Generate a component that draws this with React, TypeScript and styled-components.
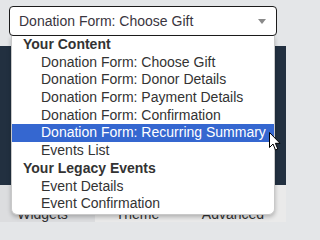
import styled, { createGlobalStyle } from 'styled-components';

const GlobalStyle = createGlobalStyle`
  html, body {
    margin: 0;
    padding: 0;
    background: #e4e6e8;
  }
  body {
    font-family: "Liberation Sans", Arial, sans-serif;
    font-size: 14px;
    color: #333;
  }
`;

const Page = styled.div`
  width: 286px;
  height: 222px;
  display: flex;
  flex-direction: column;
  overflow: hidden;
  position: relative;
`;

const Header = styled.div`
  height: 48px;
  box-sizing: border-box;
  padding: 6px 9px 0;
  background: #e4e6e8;
  position: relative;
  z-index: 2;
`;

const SelectBox = styled.div`
  position: relative;
  height: 30px;
  box-sizing: border-box;
  border: 1px solid #1c1c1c;
  border-radius: 4px;
  background: #fff;
  display: flex;
  align-items: center;
  justify-content: space-between;
  padding: 0 10px 0 9px;
`;

const SelectValue = styled.span`
  color: #3a3540;
  font-size: 14px;
`;

const Caret = styled.svg`
  width: 8px;
  height: 5px;
  margin-top: 1px;
`;

const Menu = styled.ul`
  position: absolute;
  top: 29px;
  left: 1px;
  right: 1px;
  margin: 0;
  padding: 0 0 1px;
  list-style: none;
  background: #fff;
  border: 1px solid #c9c9c9;
  border-top: none;
  border-radius: 0 0 6px 6px;
  box-shadow: 0 2px 4px rgba(0, 0, 0, 0.25);
`;

const Group = styled.li`
  margin: 0;
  padding: 0;
`;

const GroupLabel = styled.div`
  height: 17.7px;
  line-height: 17.7px;
  padding-left: 11px;
  font-weight: bold;
  color: #333;
`;

const Option = styled.div<{ $active?: boolean }>`
  height: 17.7px;
  line-height: 17.7px;
  padding-left: 29px;
  white-space: nowrap;
  color: ${(p) => (p.$active ? '#fff' : '#333')};
  background: ${(p) => (p.$active ? '#3567d0' : 'transparent')};
`;

const Pointer = styled.svg`
  position: absolute;
  left: 269px;
  top: 132px;
  width: 12px;
  height: 19px;
  z-index: 5;
`;

const Stage = styled.div`
  height: 145px;
  background: #223040;
`;

const TabBar = styled.div`
  flex: 1;
  display: grid;
  grid-template-columns: 95px 95px 1fr;
  background: #eaeaea;
`;

const Tab = styled.div<{ $active?: boolean }>`
  padding: 21px 10px 0 0;
  text-align: center;
  line-height: 16px;
  color: #333;
  background: ${(p) => (p.$active ? '#dcdddf' : 'transparent')};
`;

const groups = [
  {
    label: 'Your Content',
    items: [
      'Donation Form: Choose Gift',
      'Donation Form: Donor Details',
      'Donation Form: Payment Details',
      'Donation Form: Confirmation',
      'Donation Form: Recurring Summary',
      'Events List',
    ],
  },
  {
    label: 'Your Legacy Events',
    items: ['Event Details', 'Event Confirmation'],
  },
];

const hovered = 'Donation Form: Recurring Summary';

function App() {
  return (
    <Page>
      <GlobalStyle />
      <Header>
        <SelectBox>
          <SelectValue>Donation Form: Choose Gift</SelectValue>
          <Caret viewBox="0 0 8 5">
            <path d="M0 0 H8 L4 5 Z" fill="#8a8a8a" />
          </Caret>
          <Menu>
            {groups.map((g) => (
              <Group key={g.label}>
                <GroupLabel>{g.label}</GroupLabel>
                {g.items.map((it) => (
                  <Option key={it} $active={it === hovered}>
                    {it}
                  </Option>
                ))}
              </Group>
            ))}
          </Menu>
        </SelectBox>
      </Header>
      <Stage />
      <TabBar>
        <Tab $active>Widgets</Tab>
        <Tab>Theme</Tab>
        <Tab>Advanced</Tab>
      </TabBar>
      <Pointer viewBox="0 0 12 19">
        <path
          d="M0.5 0.5 L0.5 15.5 L4 12 L6.5 18 L8.8 17 L6.4 11.3 L11 11.3 Z"
          fill="#fff"
          stroke="#000"
          strokeWidth="1"
        />
      </Pointer>
    </Page>
  );
}

export default App;
